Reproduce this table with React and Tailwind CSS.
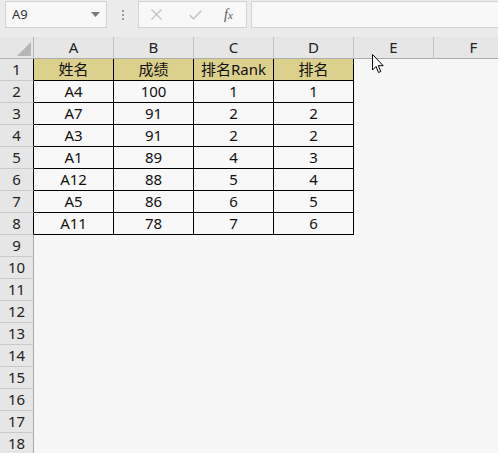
import React from "react";

const cols = ["A", "B", "C", "D", "E", "F"];
const data = [
  ["姓名", "成绩", "排名Rank", "排名"],
  ["A4", "100", "1", "1"],
  ["A7", "91", "2", "2"],
  ["A3", "91", "2", "2"],
  ["A1", "89", "4", "3"],
  ["A12", "88", "5", "4"],
  ["A5", "86", "6", "5"],
  ["A11", "78", "7", "6"],
];

const font = { fontFamily: '"Noto Sans", "Noto Sans CJK SC", sans-serif' };

export default function App() {
  const rows = Array.from({ length: 18 }, (_, i) => i + 1);
  return (
    <div
      className="relative w-[498px] h-[453px] overflow-hidden bg-[#f7f7f7] text-[#1a1a1a]"
      style={font}
    >
      {/* top bar */}
      <div className="flex h-[37px] bg-[#ececec] pt-[1px]">
        <div className="ml-[5px] flex h-[27px] w-[102px] items-center justify-between border border-[#d3d3d3] bg-[#f8f8f8] pl-[6px] pr-[6px]">
          <span className="text-[13px] text-[#333]">A9</span>
          <svg width="9" height="5" viewBox="0 0 9 5">
            <path d="M0 0 L9 0 L4.5 5 Z" fill="#7a7a7a" />
          </svg>
        </div>
        <div className="flex w-[31px] flex-col items-center justify-center gap-[2px] pb-[9px]">
          <span className="h-[2px] w-[2px] bg-[#9a9a9a]" />
          <span className="h-[2px] w-[2px] bg-[#9a9a9a]" />
          <span className="h-[2px] w-[2px] bg-[#9a9a9a]" />
        </div>
        <div className="flex h-[27px] w-[109px] items-center border border-[#d3d3d3] bg-[#f8f8f8]">
          <svg className="ml-[12px]" width="11" height="11" viewBox="0 0 11 11">
            <path d="M0.5 0.5 L10.5 10.5 M10.5 0.5 L0.5 10.5" stroke="#c4c4c4" strokeWidth="1.4" />
          </svg>
          <svg className="ml-[27px]" width="13" height="10" viewBox="0 0 13 10">
            <path d="M0.7 5 L4.5 8.8 L12.3 0.7" stroke="#c4c4c4" strokeWidth="1.6" fill="none" />
          </svg>
          <span
            className="ml-[22px] text-[14px] italic text-[#555]"
            style={{ fontFamily: '"Liberation Serif", serif' }}
          >
            f<span className="text-[11px]">x</span>
          </span>
        </div>
        <div className="ml-[4px] h-[27px] flex-1 border border-[#d3d3d3] border-r-0 bg-[#f8f8f8]" />
      </div>

      {/* grid */}
      <div className="grid grid-cols-[34px_80px_80px_80px_80px_80px_80px]">
        {/* header row */}
        <div className="relative h-[22px] border-r border-b border-[#b5b5b5] bg-[#e6e6e6]">
          <svg className="absolute right-[2px] bottom-[2px]" width="14" height="14" viewBox="0 0 14 14">
            <path d="M14 0 L14 14 L0 14 Z" fill="#b5b5b5" />
          </svg>
        </div>
        {cols.map((c) => (
          <div
            key={c}
            className="flex h-[22px] items-center justify-center border-r border-b border-[#c4c4c4] border-b-[#adadad] bg-[#e6e6e6] text-[15px] text-[#222]"
          >
            {c}
          </div>
        ))}

        {rows.map((r) => (
          <React.Fragment key={r}>
            <div
              className={
                "flex h-[22px] items-center justify-center border-r border-b border-[#c9c9c9] bg-[#e6e6e6] text-[15px] text-[#222] " +
                (r <= 8 ? "border-r-black" : "border-r-[#aaaaaa]")
              }
            >
              {r}
            </div>
            {cols.map((c, ci) => {
              const inTable = r <= 8 && ci < 4;
              if (!inTable) {
                return <div key={c} className="h-[22px]" />;
              }
              const header = r === 1;
              return (
                <div
                  key={c}
                  className={
                    "flex h-[22px] items-center justify-center border-r border-b border-black text-[15px] text-[#111] " +
                    (header ? "bg-[#dcd08d]" : "bg-[#f8f8f8]")
                  }
                >
                  {data[r - 1][ci]}
                </div>
              );
            })}
          </React.Fragment>
        ))}
      </div>

      {/* mouse cursor */}
      <svg
        className="absolute left-[372px] top-[54px]"
        width="13"
        height="20"
        viewBox="0 0 13 20"
      >
        <path
          d="M0.5 0.5 L0.5 16 L4 12.5 L6.5 18.5 L8.8 17.5 L6.3 11.7 L11.2 11.7 Z"
          fill="#ffffff"
          stroke="#000"
          strokeWidth="1"
          strokeLinejoin="round"
        />
      </svg>
    </div>
  );
}
